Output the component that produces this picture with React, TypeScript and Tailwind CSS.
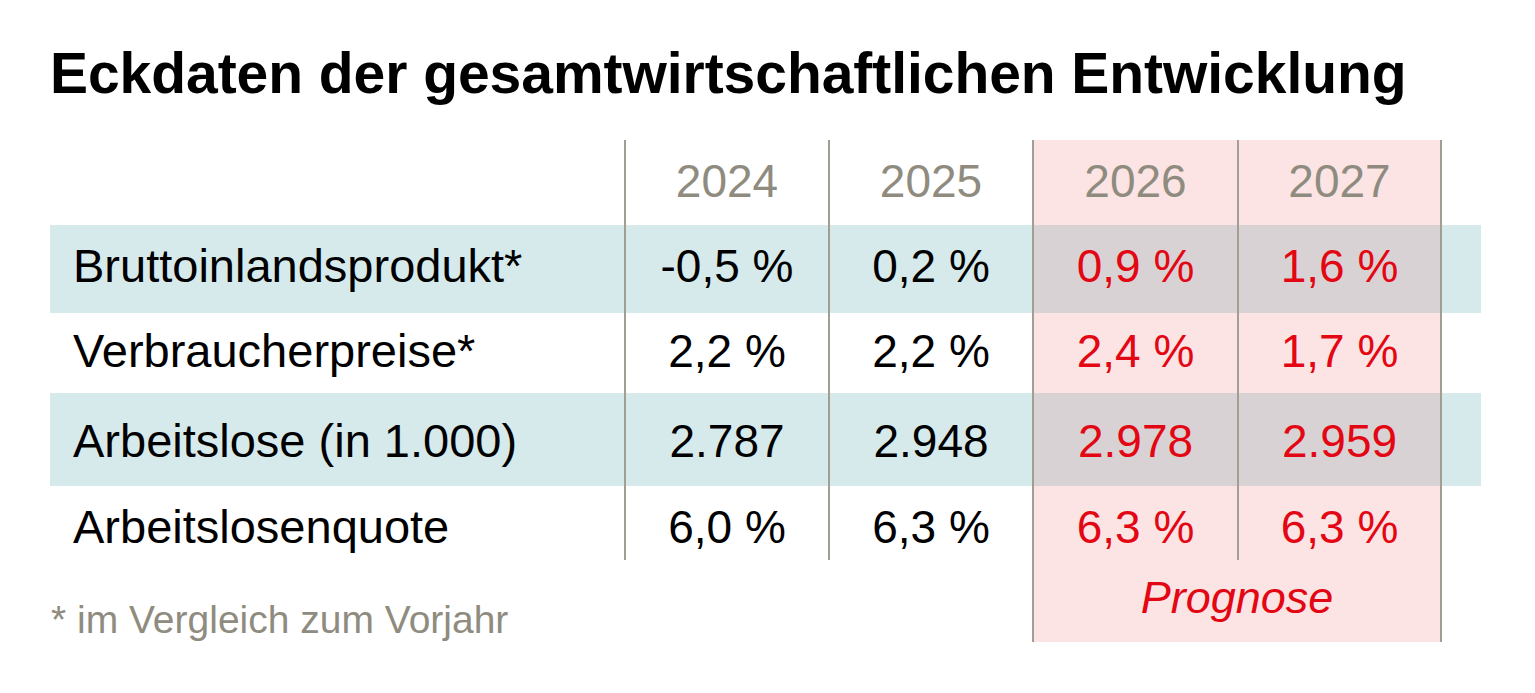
import React from "react";

type RowProps = {
  label: string;
  values: string[];
  teal: boolean;
  pt: string;
  lpt: string;
  h: string;
};

const L = "border-l-2 border-[#a19e92]";

function DataRow({ label, values, teal, pt, lpt, h }: RowProps) {
  const base = teal ? "bg-[#d6eaec]" : "bg-white";
  const prog = teal ? "bg-[#d9d2d4]" : "bg-[#fce4e5]";
  return (
    <div className={`flex ${h}`}>
      <div className={`w-[574px] ${base} ${lpt} pl-[23px] text-[47px] text-black`}>{label}</div>
      <div className={`w-[204px] ${base} ${pt} ${L} text-center text-black`}>{values[0]}</div>
      <div className={`w-[204px] ${base} ${pt} ${L} text-center text-black`}>{values[1]}</div>
      <div className={`w-[205px] ${prog} ${pt} ${L} text-center text-[#e30613]`}>{values[2]}</div>
      <div className={`w-[203px] ${prog} ${pt} ${L} text-center text-[#e30613]`}>{values[3]}</div>
      <div className={`w-[41px] ${base} ${L}`}></div>
    </div>
  );
}

export default function App() {
  return (
    <div className="min-h-[693px] w-[1535px] bg-white font-['Liberation_Sans',Arial,sans-serif]">
      <div className="pl-[50px] pt-[45px]">
        <h1 className="text-[57px] leading-none font-bold tracking-[-0.05px] text-black">
          Eckdaten der gesamtwirtschaftlichen Entwicklung
        </h1>
        <div className="mt-[38px] w-[1431px] text-[46px] leading-none">
          {/* header */}
          <div className="flex h-[85px]">
            <div className="w-[574px]"></div>
            <div className={`w-[204px] pt-[18px] ${L} text-center text-[#8f8c7f]`}>2024</div>
            <div className={`w-[204px] pt-[18px] ${L} text-center text-[#8f8c7f]`}>2025</div>
            <div className={`w-[205px] pt-[18px] ${L} bg-[#fce4e5] text-center text-[#8f8c7f]`}>2026</div>
            <div className={`w-[203px] pt-[18px] ${L} bg-[#fce4e5] text-center text-[#8f8c7f]`}>2027</div>
            <div className={`w-[41px] ${L}`}></div>
          </div>
          <DataRow label="Bruttoinlandsprodukt*" values={["-0,5 %", "0,2 %", "0,9 %", "1,6 %"]} teal pt="pt-[18px]" lpt="pt-[17px]" h="h-[88px]" />
          <DataRow label="Verbraucherpreise*" values={["2,2 %", "2,2 %", "2,4 %", "1,7 %"]} teal={false} pt="pt-[15px]" lpt="pt-[14px]" h="h-[80px]" />
          <DataRow label="Arbeitslose (in 1.000)" values={["2.787", "2.948", "2.978", "2.959"]} teal pt="pt-[25px]" lpt="pt-[24px]" h="h-[93px]" />
          <DataRow label="Arbeitslosenquote" values={["6,0 %", "6,3 %", "6,3 %", "6,3 %"]} teal={false} pt="pt-[18px]" lpt="pt-[17px]" h="h-[74px]" />
          {/* footer */}
          <div className="flex h-[82px]">
            <div className="w-[982px] pt-[40px] pl-[1px] text-[39px] leading-none text-[#8f8c7f]">
              * im Vergleich zum Vorjahr
            </div>
            <div className={`w-[408px] pt-[15px] ${L} bg-[#fce4e5] text-center text-[45px] italic text-[#e30613]`}>
              Prognose
            </div>
            <div className={`w-[41px] ${L}`}></div>
          </div>
        </div>
      </div>
    </div>
  );
}
